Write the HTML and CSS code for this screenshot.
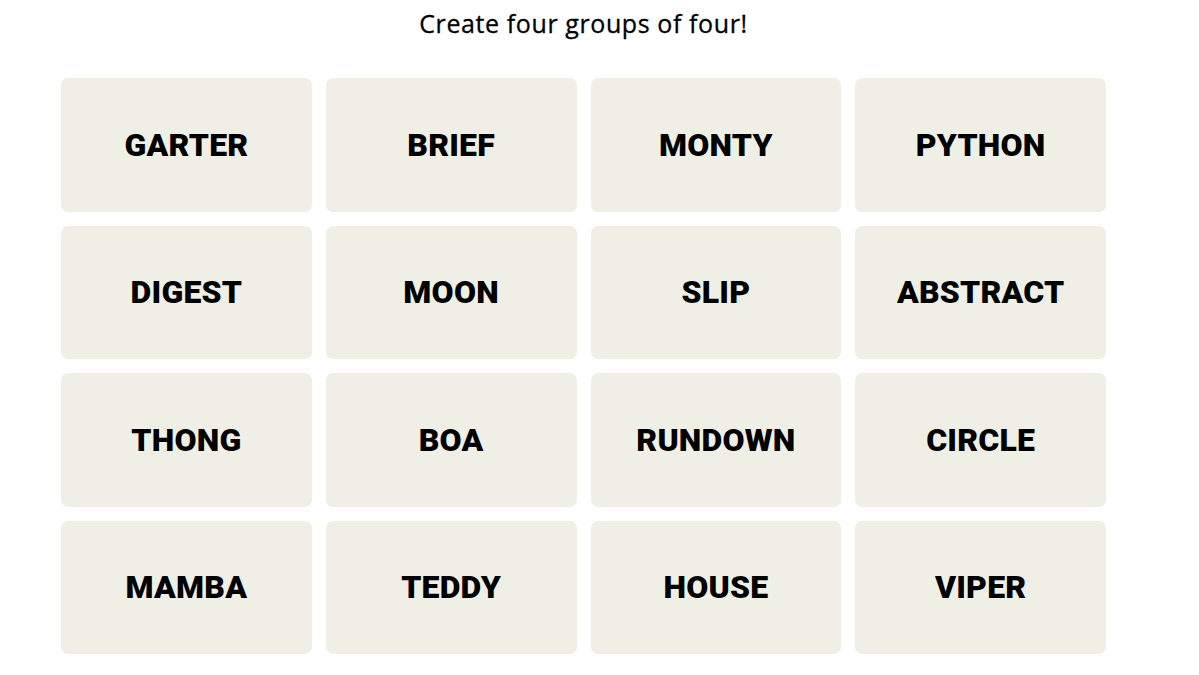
FILE: index.html
```html
<!DOCTYPE html>
<html lang="en">
<head>
    <meta charset="UTF-8">
    <title>Connections</title>
    <link rel="stylesheet" href="styles.css">
</head>
<body>
    <div class="board">
        <p class="intro">Create four groups of four!</p>
        <div class="grid">
            <button class="tile">GARTER</button>
            <button class="tile">BRIEF</button>
            <button class="tile">MONTY</button>
            <button class="tile">PYTHON</button>
            <button class="tile">DIGEST</button>
            <button class="tile">MOON</button>
            <button class="tile">SLIP</button>
            <button class="tile">ABSTRACT</button>
            <button class="tile">THONG</button>
            <button class="tile">BOA</button>
            <button class="tile">RUNDOWN</button>
            <button class="tile">CIRCLE</button>
            <button class="tile">MAMBA</button>
            <button class="tile">TEDDY</button>
            <button class="tile">HOUSE</button>
            <button class="tile">VIPER</button>
        </div>
    </div>
</body>
</html>
```
FILE: styles.css
```css
body {
    margin: 0;
    background: #fff;
    color: #000;
    font-family: Roboto, "Liberation Sans", sans-serif;
}
.board {
    width: 1045px;
    margin-left: 61px;
}
.intro {
    margin: 0;
    padding-top: 8px;
    height: 78px;
    box-sizing: border-box;
    text-align: center;
    font-family: "Open Sans", Roboto, sans-serif;
    font-size: 25px;
    line-height: 30px;
    letter-spacing: 0.6px;
    -webkit-text-stroke: 0.3px #000;
}
.grid {
    display: grid;
    grid-template-columns: repeat(4, 1fr);
    grid-auto-rows: 133.5px;
    gap: 14px;
}
.tile {
    border: none;
    border-radius: 7px;
    background: #efefe6;
    color: #000;
    font-family: Roboto, "Liberation Sans", sans-serif;
    font-weight: 900;
    font-size: 32px;
    letter-spacing: 0.2px;
    padding: 0;
    cursor: pointer;
}
```
